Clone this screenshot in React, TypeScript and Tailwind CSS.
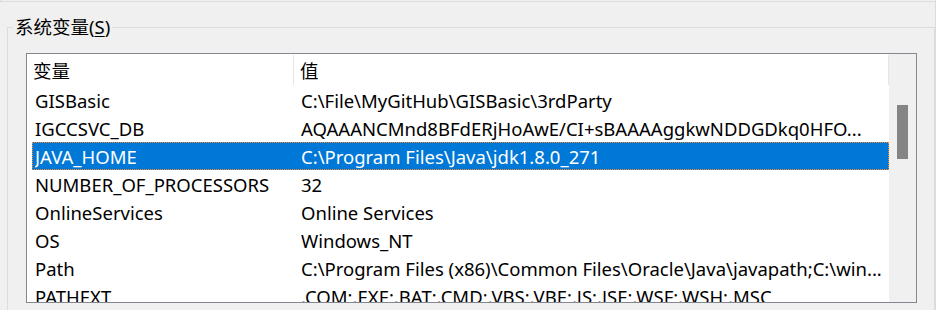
import React from "react";

type EnvVar = { name: string; value: string; selected?: boolean };

const rows: EnvVar[] = [
  { name: "GISBasic", value: "C:\\File\\MyGitHub\\GISBasic\\3rdParty" },
  { name: "IGCCSVC_DB", value: "AQAAANCMnd8BFdERjHoAwE/CI+sBAAAAggkwNDDGDkq0HFO..." },
  { name: "JAVA_HOME", value: "C:\\Program Files\\Java\\jdk1.8.0_271", selected: true },
  { name: "NUMBER_OF_PROCESSORS", value: "32" },
  { name: "OnlineServices", value: "Online Services" },
  { name: "OS", value: "Windows_NT" },
  { name: "Path", value: "C:\\Program Files (x86)\\Common Files\\Oracle\\Java\\javapath;C:\\win..." },
  { name: "PATHEXT", value: ".COM;.EXE;.BAT;.CMD;.VBS;.VBE;.JS;.JSE;.WSF;.WSH;.MSC" },
];

const Row = ({ row }: { row: EnvVar }) => (
  <div
    className={
      row.selected
        ? "flex h-[28px] ml-[5px] w-[857px] pl-[3px] leading-[29px] bg-[#0078d7] text-white outline-1 outline-dotted outline-[#ff8728] -outline-offset-1"
        : "flex h-[28px] ml-[5px] w-[857px] pl-[3px] leading-[29px] text-black"
    }
  >
    <div className="w-[266px] shrink-0 whitespace-nowrap overflow-hidden">{row.name}</div>
    <div className="flex-1 whitespace-nowrap overflow-hidden">{row.value}</div>
  </div>
);

export default function App() {
  return (
    <div
      className="w-[936px] h-[310px] overflow-hidden bg-[#f0f0f0] border-r border-[#dcdcdc] text-[18.5px] text-black"
      style={{ fontFamily: '"Noto Sans", "Noto Sans CJK SC", sans-serif' }}
    >
      <div className="h-[2px] border-b border-l border-[#dcdcdc]" />

      <fieldset className="mt-[12px] ml-[7px] w-[928px] h-[320px] border border-[#dcdcdc]">
        <legend className="ml-[5px] px-[2px] leading-[26px]">
          系统变量(<span className="underline underline-offset-2">S</span>)
        </legend>

        <div className="mt-[13px] ml-[18px] w-[891px] h-[250px] border border-[#828790] bg-white flex overflow-hidden">
          {/* list */}
          <div className="w-[862px] shrink-0">
            <div className="flex h-[32px]">
              <div className="w-[267px] pl-[6px] border-r border-[#e5e5e5] my-[1px] leading-[31px]">变量</div>
              <div className="w-[595px] pl-[6px] border-r border-[#e5e5e5] my-[1px] leading-[31px]">值</div>
            </div>
            {rows.map((r) => (
              <Row key={r.name} row={r} />
            ))}
          </div>

          {/* scrollbar */}
          <div className="flex-1 bg-[#f0f0f0] pt-[51px] pl-[8px]">
            <div className="w-[11px] h-[54px] bg-[#858585]" />
          </div>
        </div>
      </fieldset>
    </div>
  );
}
